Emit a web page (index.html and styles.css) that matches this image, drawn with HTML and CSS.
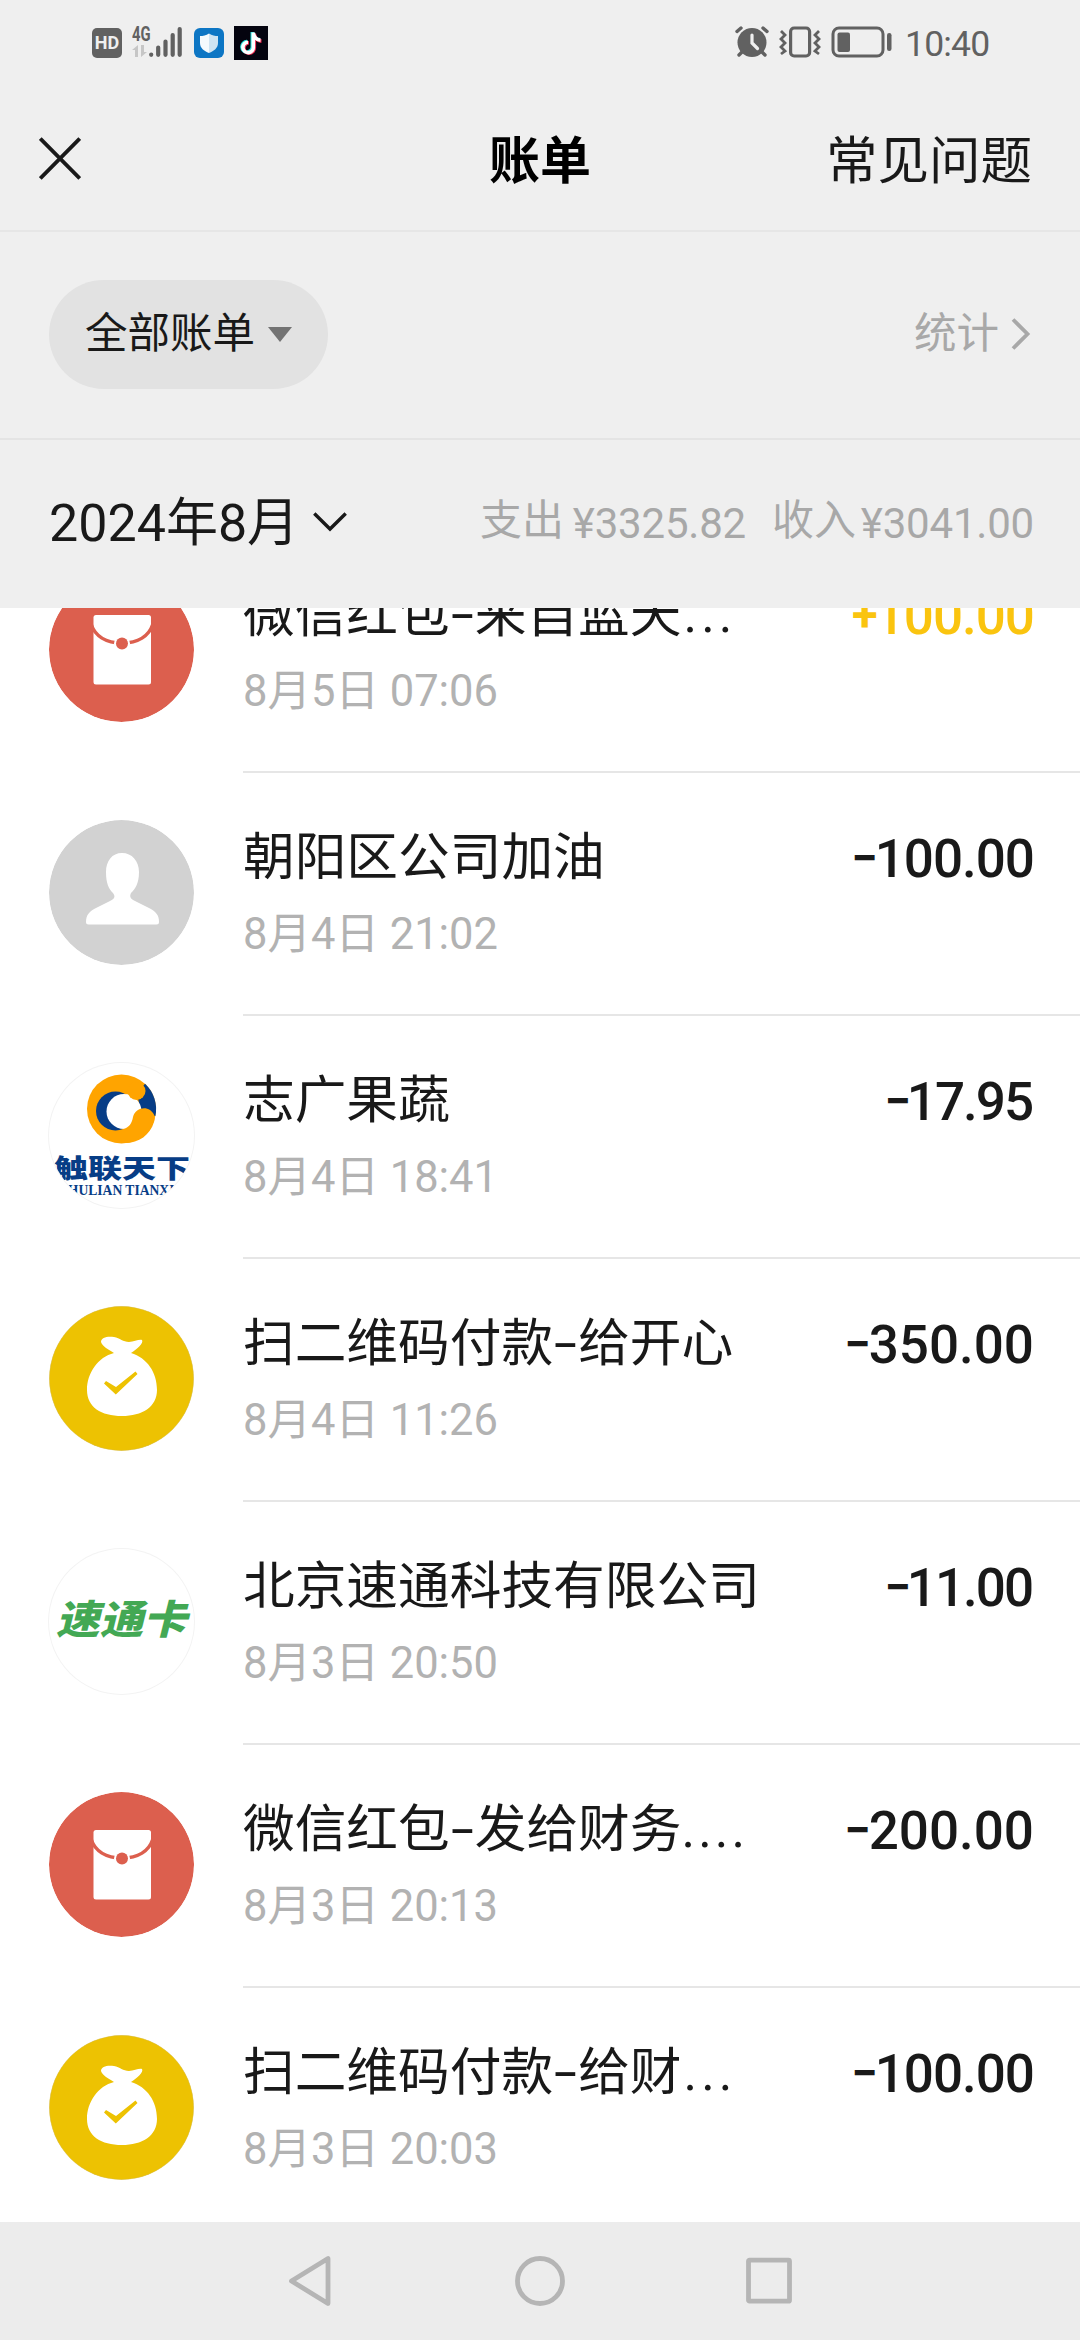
FILE: index.html
```html
<!DOCTYPE html>
<html lang="zh-CN">
<head>
  <meta charset="utf-8">
  <meta name="viewport" content="width=device-width, initial-scale=1">
  <title>账单</title>
  <link rel="stylesheet" href="styles.css">
</head>
<body>

<!-- shared icons -->
<svg class="defs" width="0" height="0">
  <symbol id="redpacket" viewBox="0 0 145 145">
    <circle cx="72.5" cy="72.5" r="72.5" fill="#dc5f4e"/>
    <rect x="44.5" y="38" width="57.5" height="69.5" rx="2.5" fill="#fff"/>
    <path d="M42 47 C46 59 57 66 73 66 C89 66 100 59 104 47" fill="none" stroke="#dc5f4e" stroke-width="3.6"/>
    <circle cx="73" cy="66.5" r="8" fill="#fff"/>
    <circle cx="73" cy="66.5" r="6" fill="#dc5f4e"/>
  </symbol>
  <symbol id="bag" viewBox="0 0 145 145">
    <circle cx="72.5" cy="72.5" r="72.2" fill="#edc202" stroke="#d9bf50" stroke-width="0.7"/>
    <path d="M65 47 C60 44 53 40 52 36 C52 31 59 30 65 31 C71 32 74 36 80 36 C85 36 90 33 93 34 C95 37 88 43 82 47 C98 52 108 66 108 84 C108 101 93 110 73 110 C52 110 38 101 38 84 C38 67 49 51 65 47 Z" fill="#fff"/>
    <path d="M57 75 L67 81 L86.500 65.500 L88.500 68 L66.800 88.500 L55 77.500 Z" fill="#edc202"/>
  </symbol>
</svg>

<div class="page">
  <div class="statusbar">
    <div class="status-left">
      <div class="hd">HD</div>
      <div class="signal">
        <div class="net">
          <span>4G</span>
          <svg width="15" height="12" viewBox="0 0 15 12" fill="#c6c6c6"><path d="M3 12V5H0L6 0V12Z M9 0V12L15 7H12V0Z"/></svg>
        </div>
        <svg class="bars" width="33" height="32" viewBox="0 0 33 32" stroke="#616161" stroke-width="4.2" stroke-linecap="round">
          <path d="M2.200 28.500V28.800 M9.200 21.500V28.800 M16.500 15.500V28.800 M23.700 9V28.800 M30.700 3V28.800"/>
        </svg>
      </div>
      <svg class="shield" width="30" height="30" viewBox="0 0 30 30">
        <rect width="30" height="30" rx="6" fill="#0d76c4"/>
        <path d="M15 5.500 C18 7.500 21 8 24 8 V15 C24 20 20 23 15 25 Z" fill="#cfe4f2"/>
        <path d="M15 5.500 C12 7.500 9 8 6 8 V15 C6 20 10 23 15 25 Z" fill="#f4fafd"/>
      </svg>
      <svg width="34" height="34" viewBox="0 0 34 34" fill="none" stroke-width="3.600">
        <rect width="34" height="34" fill="#04040f"/>
        <path d="M18.300 6V20.500A5.200 5.200 0 1 1 13 15.600 M18.300 6.500C19 10.500 21.500 13.300 25.500 13.600" stroke="#25e0dc"/>
        <path d="M20.300 7.500V21.500A5.200 5.200 0 1 1 15 16.800 M20.300 8C21 12 23.500 14.800 27.500 15.100" stroke="#ee2b50"/>
        <path d="M19.300 6.500V21A5.200 5.200 0 1 1 14 16.200 M19.300 7C20 11 22.500 13.800 26.500 14.100" stroke="#fff"/>
      </svg>
    </div>
    <div class="status-right">
      <svg width="34" height="32" viewBox="0 0 34 32">
        <g stroke="#616161" stroke-width="3.400" stroke-linecap="round"><path d="M2 5.500L6 2 M32 5.500L28 2 M4 29L8 25 M30 29L26 25"/></g>
        <circle cx="17" cy="16.500" r="14.500" fill="#616161"/>
        <path d="M17 9V17L22.500 22.500" fill="none" stroke="#efefef" stroke-width="3.200" stroke-linecap="round"/>
      </svg>
      <svg width="42" height="32" viewBox="0 0 42 32" fill="none" stroke="#616161" stroke-width="3.200">
        <rect x="11.600" y="2" width="19" height="28" rx="3.500"/>
        <path d="M2 5L6 9L2 13L6 17L2 21L6 25L2 28 M40 5L36 9L40 13L36 17L40 21L36 25L40 28" stroke-width="2.800"/>
      </svg>
      <svg width="62" height="32" viewBox="0 0 62 32">
        <rect x="2" y="2" width="50" height="28" rx="6" fill="none" stroke="#616161" stroke-width="3"/>
        <rect x="6.500" y="6.500" width="12.500" height="19.500" rx="2" fill="#616161"/>
        <rect x="56" y="7" width="4.500" height="18" rx="2.200" fill="#616161"/>
      </svg>
      <span class="clock">10:40</span>
    </div>
  </div>

  <div class="titlebar">
    <svg class="close" width="42" height="43" viewBox="0 0 42 43" stroke="#191919" stroke-width="3.800"><path d="M1.300 1.500L40.700 41.500 M40.700 1.500L1.300 41.500"/></svg>
    <h1>账单</h1>
    <a class="faq">常见问题</a>
  </div>

  <div class="filterbar">
    <div class="pill"><span>全部账单</span><svg width="24" height="15" viewBox="0 0 24 15"><path d="M0 0H24L12 15Z" fill="#737373"/></svg></div>
    <div class="stats"><span>统计</span><svg width="20" height="32" viewBox="0 0 20 32" fill="none" stroke="#a8a8a8" stroke-width="3.800"><path d="M2 1.500L16.500 16L2 30.500"/></svg></div>
  </div>

  <div class="monthbar">
    <div class="month"><span>2024年8月</span><svg width="34" height="20" viewBox="0 0 34 20" fill="none" stroke="#191919" stroke-width="3.400"><path d="M1.300 1.500L17 17L32.700 1.500"/></svg></div>
    <div class="sum">
      <span>支出</span><span class="money out">¥3325.82</span>
      <span>收入</span><span class="money">¥3041.00</span>
    </div>
  </div>

  <div class="list">
    <div class="row">
      <svg class="icon"><use href="#redpacket"/></svg>
      <div class="info">
        <div class="line"><span class="name">微信红包<i>-</i>来自蓝天<em>...</em></span><span class="amount one plus"><b>+</b>100.00</span></div>
        <div class="date">8月5日 07:06</div>
      </div>
    </div>

    <div class="row">
      <svg class="icon" viewBox="0 0 145 145">
        <circle cx="72.5" cy="72.5" r="72.5" fill="#d2d2d2"/>
        <path d="M73 33 C83 33 90 41 90 52 C90 64 86 69 82 73 C80 77 82 79 86 81 L101 88.500 C107 92 110 95 110 102 Q110 104.500 107.500 104.500 H39.500 Q37 104.500 37 102 C37 95 40 92 46 88.500 L61 81 C65 79 67 77 64 73 C60 69 57 64 57 52 C57 41 63 33 73 33 Z" fill="#fff"/>
      </svg>
      <div class="info">
        <div class="line"><span class="name">朝阳区公司加油</span><span class="amount one"><b>−</b>100.00</span></div>
        <div class="date">8月4日 21:02</div>
      </div>
    </div>

    <div class="row">
      <svg class="icon logo" viewBox="0 0 145 145">
        <circle cx="72.5" cy="46" r="34.500" fill="#ffa400"/>
        <path d="M96 20.700 A34.500 34.500 0 0 1 106.400 53 L92 50 L88 30 Z" fill="#073d86"/>
        <circle cx="66.500" cy="48" r="19.500" fill="#073d86"/>
        <path d="M82 24 L93 23 L92 36 L76 33 Z" fill="#ffa400"/>
        <circle cx="75" cy="48.500" r="17.500" fill="#fff"/>
        <circle cx="87.500" cy="28" r="9" fill="#ffa400"/>
        <path d="M84 54 C86 46 95 43 101 47 C105 50 107 54 105 59 C101 72 90 80 76 80 L74 66 C80 65 83 60 84 54 Z" fill="#ffa400"/>
        <text class="logo-cn" transform="translate(5 115) scale(1 .78)" textLength="136" lengthAdjust="spacingAndGlyphs">触联天下</text>
        <text class="logo-en" x="9" y="131.500">CHULIAN TIANXIA</text>
      </svg>
      <div class="info">
        <div class="line"><span class="name">志广果蔬</span><span class="amount tight"><b>−</b>17.95</span></div>
        <div class="date">8月4日 18:41</div>
      </div>
    </div>

    <div class="row">
      <svg class="icon"><use href="#bag"/></svg>
      <div class="info">
        <div class="line"><span class="name">扫二维码付款<i>-</i>给开心</span><span class="amount"><b>−</b>350.00</span></div>
        <div class="date">8月4日 11:26</div>
      </div>
    </div>

    <div class="row">
      <svg class="icon logo" viewBox="0 0 145 145">
        <text class="logo-card" transform="translate(7 85) skewX(-14)" textLength="131" lengthAdjust="spacingAndGlyphs">速通卡</text>
      </svg>
      <div class="info">
        <div class="line"><span class="name">北京速通科技有限公司</span><span class="amount tight"><b>−</b>11.00</span></div>
        <div class="date">8月3日 20:50</div>
      </div>
    </div>

    <div class="row">
      <svg class="icon"><use href="#redpacket"/></svg>
      <div class="info">
        <div class="line"><span class="name">微信红包<i>-</i>发给财务<em class="four">....</em></span><span class="amount"><b>−</b>200.00</span></div>
        <div class="date">8月3日 20:13</div>
      </div>
    </div>

    <div class="row">
      <svg class="icon"><use href="#bag"/></svg>
      <div class="info">
        <div class="line"><span class="name">扫二维码付款<i>-</i>给财<em>...</em></span><span class="amount one"><b>−</b>100.00</span></div>
        <div class="date">8月3日 20:03</div>
      </div>
    </div>
  </div>

  <div class="navbar">
    <svg width="50" height="54" viewBox="0 0 50 54"><path d="M42 4.500V49.500L5.500 27Z"/></svg>
    <svg width="50" height="54" viewBox="0 0 50 54"><circle cx="25" cy="27" r="22.500"/></svg>
    <svg width="50" height="54" viewBox="0 0 50 54"><rect x="4.500" y="6.200" width="41" height="41" rx="1"/></svg>
  </div>
</div>

</body>
</html>
```
FILE: styles.css
```css
* {
  box-sizing: border-box;
}
body {
  margin: 0;
  background: #fff;
  color: #191919;
  font-family: Roboto, "Noto Sans CJK SC", sans-serif;
}
svg {
  display: block;
  flex: none;
}
.defs {
  position: absolute;
}
.page {
  width: 1080px;
  height: 2340px;
  display: flex;
  flex-direction: column;
  overflow: hidden;
}

/* status bar */
.statusbar {
  height: 87px;
  flex: none;
  padding: 26px 91px 0 92px;
  display: flex;
  justify-content: space-between;
  background: #efefef;
  color: #616161;
}
.status-left, .status-right {
  height: 34px;
  display: flex;
}
.hd {
  width: 30px;
  height: 30px;
  margin-top: 2px;
  border-radius: 5px;
  background: #616161;
  color: #efefef;
  font-size: 18px;
  font-weight: 700;
  line-height: 30px;
  text-align: center;
}
.signal {
  display: flex;
  width: 72px;
  padding-left: 10px;
}
.net {
  width: 17px;
}
.net span {
  display: block;
  height: 19px;
  font-size: 20px;
  font-weight: 700;
  line-height: 16px;
  transform: scaleX(.74);
  transform-origin: 0 0;
}
.shield {
  margin: 2px 10px 0 0;
}
.status-right {
  gap: 10px;
}
.clock {
  width: 84px;
  margin-left: 2px;
  font-size: 35.5px;
  line-height: 36px;
  letter-spacing: -.8px;
  white-space: nowrap;
}

/* header */
.titlebar {
  height: 145px;
  flex: none;
  padding: 0 48px 0 39px;
  display: grid;
  grid-template-columns: 1fr auto 1fr;
  align-items: center;
  background: #efefef;
  border-bottom: 2px solid #e6e6e6;
}
.titlebar h1 {
  margin: 0 0 4px 9px;
  font-size: 51px;
  font-weight: 700;
  color: #000;
}
.faq {
  justify-self: end;
  margin-bottom: 4px;
  font-size: 51.5px;
}
.filterbar {
  height: 208px;
  flex: none;
  padding: 0 49px 2px;
  display: flex;
  align-items: center;
  justify-content: space-between;
  background: #efefef;
  border-bottom: 2px solid #e4e4e4;
}
.pill {
  width: 279px;
  height: 109px;
  padding-left: 36px;
  display: flex;
  align-items: center;
  gap: 13px;
  border-radius: 55px;
  background: #e2e2e2;
  font-size: 42.5px;
}
.pill span, .stats span {
  margin-bottom: 9px;
}
.stats {
  display: flex;
  align-items: center;
  gap: 12px;
  font-size: 42.5px;
  color: #a8a8a8;
}
.monthbar {
  height: 168px;
  flex: none;
  padding: 0 46px 4px 49px;
  display: flex;
  align-items: center;
  justify-content: space-between;
  background: #efefef;
}
.month {
  display: flex;
  align-items: center;
  gap: 14px;
  font-size: 52px;
}
.month span {
  margin-bottom: 8px;
}
.sum {
  display: flex;
  align-items: flex-start;
  font-size: 42px;
  line-height: 60px;
  color: #a8a8a8;
}
.sum .money {
  width: 178px;
  padding-top: 3px;
  letter-spacing: -.2px;
  text-align: right;
}
.sum .out {
  width: 182px;
  margin-right: 26px;
}

/* bill list */
.list {
  flex: 1;
  overflow: hidden;
  background: #fff;
}
.row {
  height: 243px;
  display: flex;
  padding-left: 49px;
}
.row:first-child {
  margin-top: -78px;
}
.icon {
  width: 145px;
  height: 145px;
  margin: 47px 49px 0 0;
  border-radius: 50%;
}
.icon.logo {
  overflow: hidden;
  box-shadow: 0 0 0 1px #f3f3f3;
}
.info {
  flex: 1;
  padding: 48px 46px 0 0;
  border-bottom: 2px solid #e6e6e6;
}
.row:last-child .info {
  border-bottom: none;
}
.line {
  height: 74px;
  display: flex;
  justify-content: space-between;
  line-height: 74px;
}
.name {
  font-size: 51.7px;
  white-space: nowrap;
}
.name i {
  display: inline-block;
  width: 25px;
  font-style: normal;
  text-align: center;
  transform: scaleX(1.6);
}
.name em {
  margin-left: 2px;
  font-style: normal;
  letter-spacing: 4px;
}
.name .four {
  margin-left: 0;
  letter-spacing: 3px;
}
.amount {
  font-size: 53px;
  font-weight: 500;
}
.amount b {
  margin-right: -2px;
  font-size: 47px;
  font-weight: 700;
  vertical-align: 3px;
}
.amount.one {
  letter-spacing: -1px;
}
.amount.tight {
  margin-right: 2px;
  letter-spacing: -2px;
}
.amount.plus {
  color: #fac40f;
}
.date {
  margin-top: 10px;
  font-size: 43.5px;
  line-height: 60px;
  color: #b2b2b2;
}
.logo-cn {
  font-size: 33px;
  font-weight: 900;
  fill: #073d86;
}
.logo-en {
  font-family: "Liberation Serif", serif;
  font-size: 13.6px;
  font-weight: 700;
  fill: #073d86;
}
.logo-card {
  font-size: 40px;
  font-weight: 900;
  fill: #43a854;
}

/* system navigation */
.navbar {
  height: 118px;
  flex: none;
  display: flex;
  align-items: center;
  justify-content: center;
  gap: 179px;
  background: #ececec;
}
.navbar svg {
  fill: none;
  stroke: #b5b5b5;
  stroke-width: 4.8;
  stroke-linejoin: round;
}
```
